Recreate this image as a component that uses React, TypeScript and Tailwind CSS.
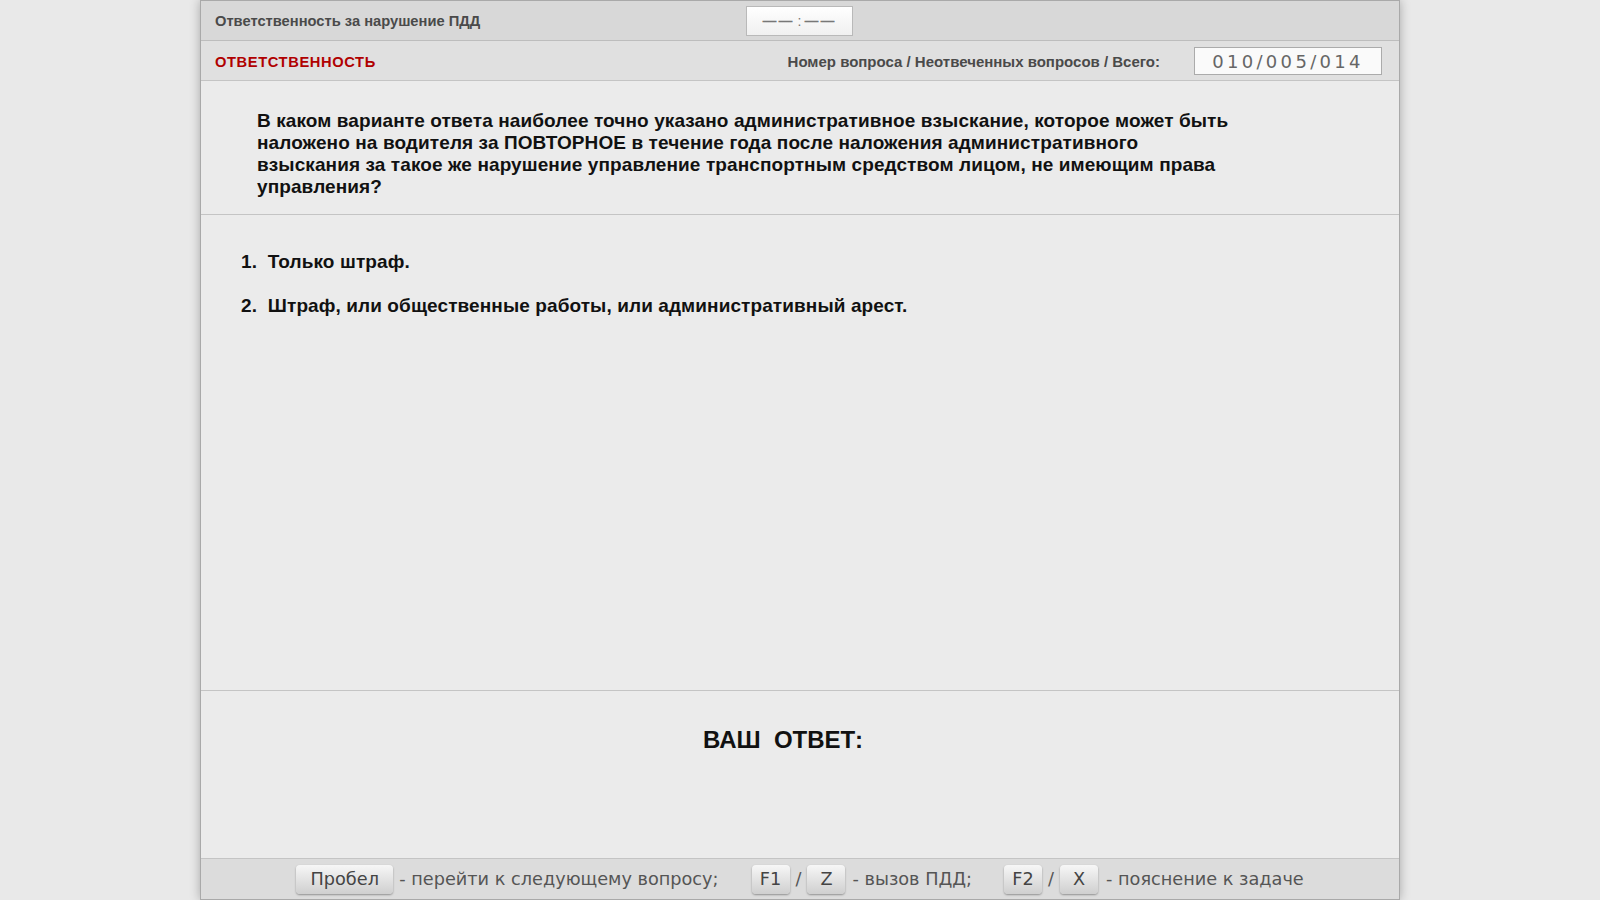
const Key = ({ label, wide = false }: { label: string; wide?: boolean }) => (
  <span
    className={`inline-flex h-[29px] items-center justify-center rounded-[4px] bg-gradient-to-b from-[#f7f7f7] to-[#cfcfcf] text-[#444] shadow-[0_1px_2px_rgba(0,0,0,0.35)] ${
      wide ? "w-[97px]" : "w-[38px]"
    }`}
  >
    {label}
  </span>
);

const answers = [
  "Только штраф.",
  "Штраф, или общественные работы, или административный арест.",
];

const App = () => {
  return (
    <div className="min-h-screen w-full bg-[#e9e9e9] font-['Liberation_Sans',Arial,sans-serif]">
      <div className="mx-auto flex w-[1200px] flex-col border border-[#a9a9a9] bg-[#ebebeb] shadow-[0_0_10px_rgba(0,0,0,0.28)]">
        {/* Header */}
        <div className="relative flex h-[40px] items-center border-b border-[#bdbdbd] bg-[#d8d8d8] px-[14px] pt-[2px]">
          <span className="text-[14.7px] font-bold text-[#4a4a4a]">Ответственность за нарушение ПДД</span>
          <div className="absolute left-[545px] top-[5px] flex h-[30px] w-[107px] items-center justify-center border border-[#b9b9b9] bg-gradient-to-b from-[#ffffff] to-[#f0f0f0] text-[14px] font-bold text-[#777]">
            <span className="tracking-[2px]">——</span>
            <span className="mx-[3px] font-normal">:</span>
            <span className="tracking-[2px]">——</span>
          </div>
        </div>

        {/* Theme / counter */}
        <div className="flex h-[40px] items-center border-b border-[#c4c4c4] bg-[#e0e0e0] pl-[14px] pr-[17px]">
          <span className="pt-[3px] text-[14.7px] font-bold tracking-[0.6px] text-[#b00000]">ОТВЕТСТВЕННОСТЬ</span>
          <span className="ml-auto mr-[34px] pt-[3px] text-[15px] font-bold text-[#4a4a4a]">
            Номер вопроса / Неотвеченных вопросов / Всего:
          </span>
          <div className="mt-[1px] flex h-[28px] w-[188px] items-center justify-center border border-[#ababab] bg-[#fafafa] font-['DejaVu_Sans',Verdana,sans-serif] text-[18px] tracking-[3.3px] text-[#666]">
            010/005/014
          </div>
        </div>

        {/* Question */}
        <div className="h-[134px] border-b border-[#c4c4c4] pl-[56px] pt-[29px]">
          <p className="w-[977px] text-[19px] font-bold leading-[22px] tracking-[0.1px] text-[#111]">
            В каком варианте ответа наиболее точно указано административное взыскание, которое может быть
            наложено на водителя за ПОВТОРНОЕ в течение года после наложения административного взыскания за
            такое же нарушение управление транспортным средством лицом, не имеющим права управления?
          </p>
        </div>

        {/* Answers */}
        <div className="flex h-[476px] flex-col gap-[23px] border-b border-[#c4c4c4] pl-[40px] pt-[36px]">
          {answers.map((a, i) => (
            <div key={i} className="text-[19px] font-bold leading-[21px] tracking-[0.1px] text-[#111]">
              {i + 1}.&nbsp;&nbsp;{a}
            </div>
          ))}
        </div>

        {/* Your answer */}
        <div className="flex h-[168px] justify-center border-b border-[#c4c4c4] pr-[34px] pt-[35px]">
          <span className="whitespace-pre text-[24px] font-bold leading-[27px] text-[#111]">ВАШ  ОТВЕТ:</span>
        </div>

        {/* Footer hints */}
        <div className="flex h-[40px] items-center justify-center bg-[#dcdcdc] font-['DejaVu_Sans',Verdana,sans-serif] text-[17.7px] text-[#555]">
          <Key label="Пробел" wide />
          <span className="ml-[6px]">- перейти к следующему вопросу;</span>
          <span className="ml-[33px]">
            <Key label="F1" />
          </span>
          <span className="mx-[6px]">/</span>
          <Key label="Z" />
          <span className="ml-[7px]">- вызов ПДД;</span>
          <span className="ml-[32px]">
            <Key label="F2" />
          </span>
          <span className="mx-[6px]">/</span>
          <Key label="X" />
          <span className="ml-[8px]">- пояснение к задаче</span>
        </div>
      </div>
    </div>
  );
};

export default App;
